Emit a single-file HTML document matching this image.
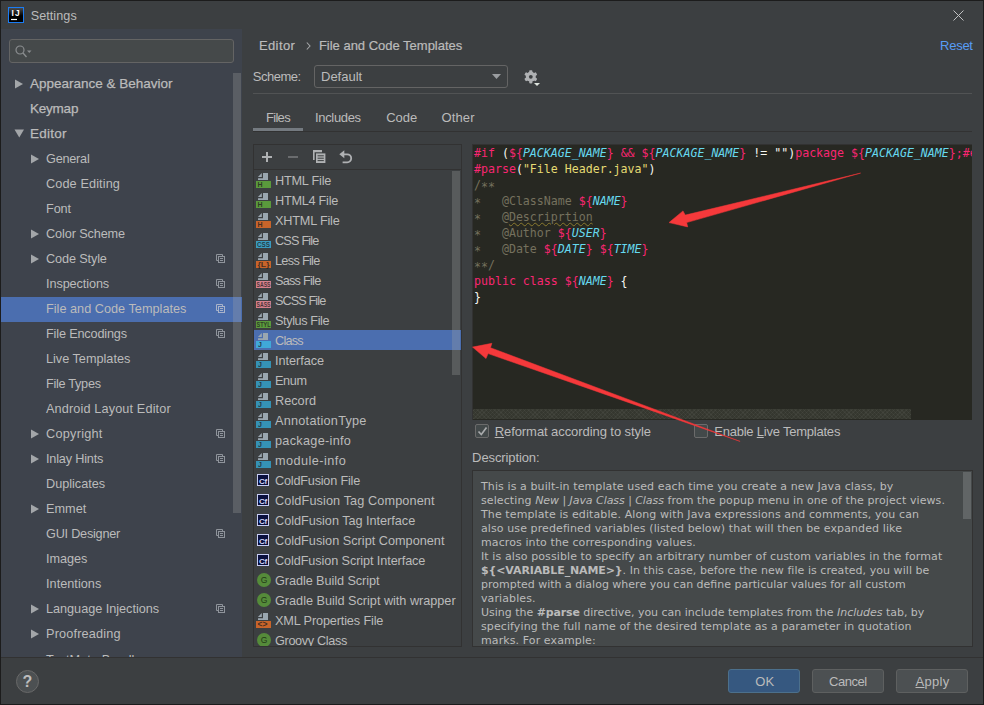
<!DOCTYPE html>
<html><head><meta charset="utf-8"><title>Settings</title>
<style>
*{box-sizing:border-box;margin:0;padding:0}
html,body{width:984px;height:705px;overflow:hidden;background:#3c3f41}
body{position:relative;font-family:"Liberation Sans",sans-serif;font-size:12.7px;color:#bbbbbb}
.abs{position:absolute}
svg{position:absolute;overflow:visible}
#frame{position:absolute;left:0;top:0;width:984px;height:705px;border:1px solid #1c1c1c;z-index:50}
#title{position:absolute;left:31px;top:8px;height:16px;line-height:16px;font-size:12.6px;color:#bbbbbb}
#left{position:absolute;left:1px;top:29px;width:241px;height:628px;background:#3e434c;overflow:hidden}
#search{position:absolute;left:8px;top:10px;width:225px;height:24px;border:1px solid #646464;border-radius:3px;background:#45494a}
.row{position:absolute;left:0;width:241px;height:25px;line-height:25px;white-space:nowrap}
.row.sel{background:#4b6eaf}
.row .t{position:absolute;top:0}
.l0 .t{left:29px;top:-1px;font-size:13.5px;-webkit-text-stroke:.25px #bbbbbb}
.l1 .t{left:45px;font-size:12.7px}
.arr{top:7px;width:10px;height:10px}
.cp{left:215px;top:7px;width:10px;height:10px}
#lsb{position:absolute;left:232px;top:44px;width:8px;height:440px;background:rgba(166,166,166,.28)}
#sep{position:absolute;left:1px;top:657px;width:982px;height:1px;background:#323232}
.btn{position:absolute;top:669px;width:72px;height:24px;line-height:22px;text-align:center;border:1px solid #5e6060;border-radius:3px;background:#4c5052;font-size:13px;color:#bbbbbb}
.btn.ok{background:#365880;border-color:#4c708c}
#help{position:absolute;left:16px;top:670px;width:23px;height:23px;border-radius:12px;background:#4c5052;border:1px solid #686868;text-align:center;line-height:21px;font-size:16px;font-weight:bold;color:#bdbdbd}
#crumb{position:absolute;left:259px;top:36px;height:18px;line-height:18px;font-size:13.6px;white-space:nowrap}
#reset{position:absolute;left:940px;top:36px;height:18px;line-height:18px;font-size:13px;color:#589df6}
#schl{position:absolute;left:253px;top:67px;height:18px;line-height:18px;font-size:13px}
#combo{position:absolute;left:314px;top:65px;width:194px;height:23px;border:1px solid #646464;border-radius:3px;line-height:21px;padding-left:6px;font-size:13px}
.lb{position:absolute;height:16px;line-height:16px;white-space:nowrap;z-index:5}
u{text-underline-offset:1px}
.hl{position:absolute;left:253px;width:719px;height:1px}
.tab{position:absolute;top:108px;height:18px;line-height:18px;font-size:13px;white-space:nowrap}
#tabu{position:absolute;left:253px;top:128px;width:50px;height:3px;background:#747a80}
#list{position:absolute;left:253px;top:144px;width:209px;height:503px;border:1px solid #323232;overflow:hidden}
#ltb{position:absolute;left:0;top:0;width:207px;height:25px;border-bottom:1px solid #323232}
.li{position:absolute;left:0;width:207px;height:20px;line-height:20px;white-space:nowrap}
.li.sel{background:#4b6eaf}
.li .t{position:absolute;left:21px;top:1px;font-size:12.7px}
.li svg{left:2px;top:2px;width:16px;height:16px}
#lsb2{position:absolute;left:198px;top:26px;width:8px;height:204px;background:rgba(166,166,166,.27)}
#ed{position:absolute;left:472px;top:144px;width:500px;height:276px;background:#272822;border:1px solid #323232;border-right:none;border-bottom:none;overflow:hidden}
#code{position:absolute;left:1px;top:0px;font-family:"DejaVu Sans Mono","Liberation Mono",monospace;font-size:11.6px;line-height:16px;white-space:pre;color:#f8f8f2;letter-spacing:0}
#code .k{color:#f92672}
#code .v{color:#66d9ef;font-style:italic}
#code .s{color:#e6db74}
#code .c{color:#75715e}
#code .a{position:relative;top:2px}
#code .w{text-decoration:underline wavy #8a7a2e;text-decoration-thickness:1px;text-underline-offset:1px}
#hsb{position:absolute;left:0;top:264px;width:438px;height:10px;background:repeating-linear-gradient(45deg,rgba(255,255,255,.035) 0 1px,transparent 1px 3px),repeating-linear-gradient(-45deg,rgba(255,255,255,.035) 0 1px,transparent 1px 3px),#35372f}
.cb{position:absolute;top:424px;width:14px;height:14px;border:1px solid #6b6b6b;border-radius:2px;background:#43494a}
.cbl{position:absolute;top:422px;height:18px;line-height:18px;font-size:13px;white-space:nowrap}
#dl{position:absolute;left:473px;top:448px;height:18px;line-height:18px;font-size:13px}
#desc{position:absolute;left:472px;top:470px;width:501px;height:177px;border:1px solid #323232;background:#45494a;overflow:hidden}
#dt{position:absolute;left:8px;top:9px;width:480px;font-family:"DejaVu Sans","Liberation Sans",sans-serif;font-size:11px;line-height:14px;white-space:nowrap;color:#bbbbbb}
#dt div{height:14px}
#dt b{letter-spacing:-.12px}
#dt i{letter-spacing:-.05px}
#dsb{position:absolute;left:490px;top:1px;width:8px;height:47px;background:#616566}
</style></head><body>
<svg style="left:8px;top:7px;width:16px;height:16px" viewBox="0 0 16 16"><defs><linearGradient id="ijg" x1="0" y1="0" x2="0" y2="1"><stop offset="0" stop-color="#505050"/><stop offset=".55" stop-color="#000"/><stop offset="1" stop-color="#000"/></linearGradient></defs><rect x=".5" y=".5" width="15" height="15" fill="url(#ijg)" stroke="#1a7cf4" stroke-width="1"/><text y="9" font-family="Liberation Sans,sans-serif" font-weight="bold" font-size="8.4" fill="#fff"><tspan x="3.4">I</tspan><tspan x="7">J</tspan></text><rect x="3" y="11.9" width="6" height="1.2" fill="#fff"/></svg>
<svg style="left:953px;top:10px;width:11px;height:11px" viewBox="0 0 11 11"><path d="M0.5 0.5L10.5 10.5M10.5 0.5L0.5 10.5" stroke="#c0c1c2" stroke-width="1" fill="none"/></svg>
<div id="left">
 <div id="search"><svg style="left:5px;top:5px;width:20px;height:13px" viewBox="0 0 20 13" fill="none" stroke="#8a8d8f"><circle cx="5" cy="5" r="4" stroke-width="1.2"/><path d="M8 8L11.5 12" stroke-width="1.4"/><path d="M12 5.5H16.5L14.25 8Z" fill="#8a8d8f" stroke="none"/></svg></div>
<div class="row l0" style="top:43px"><svg class="arr" style="left:14px" viewBox="0 0 10 10"><path d="M0 0.5 L8 5 L0 9.5Z" fill="#a3a6a9"/></svg><span class="t" style="letter-spacing:-0.01px">Appearance &amp; Behavior</span></div>
<div class="row l0" style="top:68px"><span class="t" style="letter-spacing:-0.226px">Keymap</span></div>
<div class="row l0" style="top:93px"><svg class="arr" style="left:14px" viewBox="0 0 10 10"><path d="M-0.5 0.5 L9 0.5 L4.25 8.5Z" fill="#a3a6a9"/></svg><span class="t" style="letter-spacing:0.224px">Editor</span></div>
<div class="row l1" style="top:118px"><svg class="arr" style="left:30px" viewBox="0 0 10 10"><path d="M0 0.5 L8 5 L0 9.5Z" fill="#a3a6a9"/></svg><span class="t" style="letter-spacing:-0.24px">General</span></div>
<div class="row l1" style="top:143px"><span class="t" style="letter-spacing:0.113px">Code Editing</span></div>
<div class="row l1" style="top:168px"><span class="t" style="letter-spacing:-0.097px">Font</span></div>
<div class="row l1" style="top:193px"><svg class="arr" style="left:30px" viewBox="0 0 10 10"><path d="M0 0.5 L8 5 L0 9.5Z" fill="#a3a6a9"/></svg><span class="t" style="letter-spacing:-0.117px">Color Scheme</span></div>
<div class="row l1" style="top:218px"><svg class="arr" style="left:30px" viewBox="0 0 10 10"><path d="M0 0.5 L8 5 L0 9.5Z" fill="#a3a6a9"/></svg><span class="t" style="letter-spacing:-0.129px">Code Style</span><svg class="cp" viewBox="0 0 10 10" fill="none" stroke="#8f949b" stroke-width="1"><path d="M2.5 6.5H0.5V0.5H6.5V2.5"/><rect x="2.5" y="2.5" width="6" height="6"/><path d="M4 4.5H7M4 6.5H7"/></svg></div>
<div class="row l1" style="top:243px"><span class="t" style="letter-spacing:-0.099px">Inspections</span><svg class="cp" viewBox="0 0 10 10" fill="none" stroke="#8f949b" stroke-width="1"><path d="M2.5 6.5H0.5V0.5H6.5V2.5"/><rect x="2.5" y="2.5" width="6" height="6"/><path d="M4 4.5H7M4 6.5H7"/></svg></div>
<div class="row l1 sel" style="top:268px"><span class="t" style="letter-spacing:0.013px">File and Code Templates</span><svg class="cp" viewBox="0 0 10 10" fill="none" stroke="#a9b3c9" stroke-width="1"><path d="M2.5 6.5H0.5V0.5H6.5V2.5"/><rect x="2.5" y="2.5" width="6" height="6"/><path d="M4 4.5H7M4 6.5H7"/></svg></div>
<div class="row l1" style="top:293px"><span class="t" style="letter-spacing:-0.163px">File Encodings</span><svg class="cp" viewBox="0 0 10 10" fill="none" stroke="#8f949b" stroke-width="1"><path d="M2.5 6.5H0.5V0.5H6.5V2.5"/><rect x="2.5" y="2.5" width="6" height="6"/><path d="M4 4.5H7M4 6.5H7"/></svg></div>
<div class="row l1" style="top:318px"><span class="t" style="letter-spacing:-0.008px">Live Templates</span></div>
<div class="row l1" style="top:343px"><span class="t" style="letter-spacing:-0.288px">File Types</span></div>
<div class="row l1" style="top:368px"><span class="t" style="letter-spacing:0.133px">Android Layout Editor</span></div>
<div class="row l1" style="top:393px"><svg class="arr" style="left:30px" viewBox="0 0 10 10"><path d="M0 0.5 L8 5 L0 9.5Z" fill="#a3a6a9"/></svg><span class="t" style="letter-spacing:0.261px">Copyright</span><svg class="cp" viewBox="0 0 10 10" fill="none" stroke="#8f949b" stroke-width="1"><path d="M2.5 6.5H0.5V0.5H6.5V2.5"/><rect x="2.5" y="2.5" width="6" height="6"/><path d="M4 4.5H7M4 6.5H7"/></svg></div>
<div class="row l1" style="top:418px"><svg class="arr" style="left:30px" viewBox="0 0 10 10"><path d="M0 0.5 L8 5 L0 9.5Z" fill="#a3a6a9"/></svg><span class="t" style="letter-spacing:-0.193px">Inlay Hints</span><svg class="cp" viewBox="0 0 10 10" fill="none" stroke="#8f949b" stroke-width="1"><path d="M2.5 6.5H0.5V0.5H6.5V2.5"/><rect x="2.5" y="2.5" width="6" height="6"/><path d="M4 4.5H7M4 6.5H7"/></svg></div>
<div class="row l1" style="top:443px"><span class="t" style="letter-spacing:-0.017px">Duplicates</span></div>
<div class="row l1" style="top:468px"><svg class="arr" style="left:30px" viewBox="0 0 10 10"><path d="M0 0.5 L8 5 L0 9.5Z" fill="#a3a6a9"/></svg><span class="t" style="letter-spacing:0.028px">Emmet</span></div>
<div class="row l1" style="top:493px"><span class="t" style="letter-spacing:-0.233px">GUI Designer</span><svg class="cp" viewBox="0 0 10 10" fill="none" stroke="#8f949b" stroke-width="1"><path d="M2.5 6.5H0.5V0.5H6.5V2.5"/><rect x="2.5" y="2.5" width="6" height="6"/><path d="M4 4.5H7M4 6.5H7"/></svg></div>
<div class="row l1" style="top:518px"><span class="t" style="letter-spacing:-0.042px">Images</span></div>
<div class="row l1" style="top:543px"><span class="t" style="letter-spacing:0.03px">Intentions</span></div>
<div class="row l1" style="top:568px"><svg class="arr" style="left:30px" viewBox="0 0 10 10"><path d="M0 0.5 L8 5 L0 9.5Z" fill="#a3a6a9"/></svg><span class="t" style="letter-spacing:-0.027px">Language Injections</span><svg class="cp" viewBox="0 0 10 10" fill="none" stroke="#8f949b" stroke-width="1"><path d="M2.5 6.5H0.5V0.5H6.5V2.5"/><rect x="2.5" y="2.5" width="6" height="6"/><path d="M4 4.5H7M4 6.5H7"/></svg></div>
<div class="row l1" style="top:593px"><svg class="arr" style="left:30px" viewBox="0 0 10 10"><path d="M0 0.5 L8 5 L0 9.5Z" fill="#a3a6a9"/></svg><span class="t" style="letter-spacing:0.177px">Proofreading</span></div>
<div class="row l1" style="top:618px"><span class="t" style="letter-spacing:0.076px;top:1px">TextMate Bundles</span></div>
 <div id="lsb"></div>
</div>
<div id="combo">Default<svg style="left:177px;top:8px;width:9px;height:5px" viewBox="0 0 9 5"><path d="M0 0H9L4.5 5Z" fill="#9a9da0"/></svg></div>
<svg style="left:524px;top:70px;width:17px;height:17px" viewBox="0 0 17 17"><g transform="translate(6.8 6.8)"><g fill="#afb1b3"><circle r="5"/><rect x="-1.6" y="-6.6" width="3.2" height="13.2" rx=".8"/><rect x="-1.6" y="-6.6" width="3.2" height="13.2" rx=".8" transform="rotate(60)"/><rect x="-1.6" y="-6.6" width="3.2" height="13.2" rx=".8" transform="rotate(120)"/></g><circle r="1.9" fill="#3c3f41"/></g><path d="M10 13H16L13 16Z" fill="#dfe6df"/></svg>
<div class="hl" style="top:93px;background:#515354"></div>
<div class="hl" style="top:131px;background:#323232"></div>
<div id="tabu"></div>
<div id="list">
<div id="ltb">
<svg style="left:8px;top:7px;width:10px;height:10px" viewBox="0 0 10 10"><path d="M4 0H6V4H10V6H6V10H4V6H0V4H4Z" fill="#afb1b3"/></svg>
<svg style="left:34px;top:7px;width:10px;height:10px" viewBox="0 0 10 10"><rect x="0" y="4" width="10" height="2" fill="#6a6c6e"/></svg>
<svg style="left:59px;top:5px;width:13px;height:13px" viewBox="0 0 13 13"><path d="M0 0H9V2.2H1.6V10H0Z" fill="#afb1b3"/><rect x="3" y="3.4" width="9.4" height="9.6" fill="#afb1b3"/><path d="M4.6 5.8H10.8M4.6 8.2H10.8M4.6 10.6H10.8" stroke="#3c3f41" stroke-width="1"/></svg>
<svg style="left:85px;top:5px;width:14px;height:14px" viewBox="0 0 14 14"><path d="M0.3 4.3L5.3 0.3V8.3Z" fill="#afb1b3"/><path d="M5 4.3H8.2A4 4 0 0 1 8.2 12.3H3.6" fill="none" stroke="#afb1b3" stroke-width="1.8"/></svg>
</div>
<div class="li" style="top:25px"><svg viewBox="0 0 16 16"><path d="M7 1H12V8H2V6.2H7Z" fill="#9aa7b0"/><path d="M1.9 5L5.8 1V5Z" fill="#9aa7b0"/><rect x="0" y="9" width="15" height="7" fill="#5a9a3c"/><text x="1.5" y="15.2" font-family="Liberation Sans,sans-serif" font-size="7" font-weight="bold" fill="#231f20" fill-opacity=".8" text-anchor="start">H</text></svg><span class="t" style="letter-spacing:-0.206px">HTML File</span></div>
<div class="li" style="top:45px"><svg viewBox="0 0 16 16"><path d="M7 1H12V8H2V6.2H7Z" fill="#9aa7b0"/><path d="M1.9 5L5.8 1V5Z" fill="#9aa7b0"/><rect x="0" y="9" width="15" height="7" fill="#5a9a3c"/><text x="1.5" y="15.2" font-family="Liberation Sans,sans-serif" font-size="7" font-weight="bold" fill="#231f20" fill-opacity=".8" text-anchor="start">H</text></svg><span class="t" style="letter-spacing:-0.251px">HTML4 File</span></div>
<div class="li" style="top:65px"><svg viewBox="0 0 16 16"><path d="M7 1H12V8H2V6.2H7Z" fill="#9aa7b0"/><path d="M1.9 5L5.8 1V5Z" fill="#9aa7b0"/><rect x="0" y="9" width="15" height="7" fill="#c8642a"/><text x="1.5" y="15.2" font-family="Liberation Sans,sans-serif" font-size="7" font-weight="bold" fill="#231f20" fill-opacity=".8" text-anchor="start">H</text></svg><span class="t" style="letter-spacing:-0.189px">XHTML File</span></div>
<div class="li" style="top:85px"><svg viewBox="0 0 16 16"><path d="M7 1H12V8H2V6.2H7Z" fill="#9aa7b0"/><path d="M1.9 5L5.8 1V5Z" fill="#9aa7b0"/><rect x="0" y="9" width="15" height="7" fill="#3a9bc0"/><text x="1" y="15.2" font-family="Liberation Sans,sans-serif" font-size="7" font-weight="bold" fill="#231f20" fill-opacity=".8" text-anchor="start" textLength="13" lengthAdjust="spacingAndGlyphs">CSS</text></svg><span class="t" style="letter-spacing:-0.809px">CSS File</span></div>
<div class="li" style="top:105px"><svg viewBox="0 0 16 16"><path d="M7 1H12V8H2V6.2H7Z" fill="#9aa7b0"/><path d="M1.9 5L5.8 1V5Z" fill="#9aa7b0"/><rect x="0" y="9" width="15" height="7" fill="#c8642a"/><text x="1.5" y="15.2" font-family="Liberation Sans,sans-serif" font-size="7" font-weight="bold" fill="#231f20" fill-opacity=".8" text-anchor="start" textLength="12" lengthAdjust="spacingAndGlyphs">{L}</text></svg><span class="t" style="letter-spacing:-0.685px">Less File</span></div>
<div class="li" style="top:125px"><svg viewBox="0 0 16 16"><path d="M7 1H12V8H2V6.2H7Z" fill="#9aa7b0"/><path d="M1.9 5L5.8 1V5Z" fill="#9aa7b0"/><rect x="0" y="9" width="15" height="7" fill="#d5808d"/><text x="0.5" y="15.2" font-family="Liberation Sans,sans-serif" font-size="7" font-weight="bold" fill="#231f20" fill-opacity=".8" text-anchor="start" textLength="14" lengthAdjust="spacingAndGlyphs">SASS</text></svg><span class="t" style="letter-spacing:-0.748px">Sass File</span></div>
<div class="li" style="top:145px"><svg viewBox="0 0 16 16"><path d="M7 1H12V8H2V6.2H7Z" fill="#9aa7b0"/><path d="M1.9 5L5.8 1V5Z" fill="#9aa7b0"/><rect x="0" y="9" width="15" height="7" fill="#d5808d"/><text x="0.5" y="15.2" font-family="Liberation Sans,sans-serif" font-size="7" font-weight="bold" fill="#231f20" fill-opacity=".8" text-anchor="start" textLength="14" lengthAdjust="spacingAndGlyphs">SASS</text></svg><span class="t" style="letter-spacing:-0.916px">SCSS File</span></div>
<div class="li" style="top:165px"><svg viewBox="0 0 16 16"><path d="M7 1H12V8H2V6.2H7Z" fill="#9aa7b0"/><path d="M1.9 5L5.8 1V5Z" fill="#9aa7b0"/><rect x="0" y="9" width="15" height="7" fill="#5a9a3c"/><text x="0.5" y="15.2" font-family="Liberation Sans,sans-serif" font-size="7.5" font-weight="bold" fill="#231f20" fill-opacity=".8" text-anchor="start" textLength="14" lengthAdjust="spacingAndGlyphs">STYL</text></svg><span class="t" style="letter-spacing:-0.393px">Stylus File</span></div>
<div class="li sel" style="top:185px"><svg viewBox="0 0 16 16"><path d="M7 1H12V8H2V6.2H7Z" fill="#9aa7b0"/><path d="M1.9 5L5.8 1V5Z" fill="#9aa7b0"/><rect x="0" y="9" width="15" height="7" fill="#40a9d8"/><text x="2" y="15.2" font-family="Liberation Sans,sans-serif" font-size="7" font-weight="bold" fill="#231f20" fill-opacity=".8" text-anchor="start">J</text></svg><span class="t" style="letter-spacing:-0.759px">Class</span></div>
<div class="li" style="top:205px"><svg viewBox="0 0 16 16"><path d="M7 1H12V8H2V6.2H7Z" fill="#9aa7b0"/><path d="M1.9 5L5.8 1V5Z" fill="#9aa7b0"/><rect x="0" y="9" width="15" height="7" fill="#3592b5"/><text x="2" y="15.2" font-family="Liberation Sans,sans-serif" font-size="7" font-weight="bold" fill="#231f20" fill-opacity=".8" text-anchor="start">J</text></svg><span class="t" style="letter-spacing:-0.034px">Interface</span></div>
<div class="li" style="top:225px"><svg viewBox="0 0 16 16"><path d="M7 1H12V8H2V6.2H7Z" fill="#9aa7b0"/><path d="M1.9 5L5.8 1V5Z" fill="#9aa7b0"/><rect x="0" y="9" width="15" height="7" fill="#3592b5"/><text x="2" y="15.2" font-family="Liberation Sans,sans-serif" font-size="7" font-weight="bold" fill="#231f20" fill-opacity=".8" text-anchor="start">J</text></svg><span class="t" style="letter-spacing:-0.352px">Enum</span></div>
<div class="li" style="top:245px"><svg viewBox="0 0 16 16"><path d="M7 1H12V8H2V6.2H7Z" fill="#9aa7b0"/><path d="M1.9 5L5.8 1V5Z" fill="#9aa7b0"/><rect x="0" y="9" width="15" height="7" fill="#3592b5"/><text x="2" y="15.2" font-family="Liberation Sans,sans-serif" font-size="7" font-weight="bold" fill="#231f20" fill-opacity=".8" text-anchor="start">J</text></svg><span class="t" style="letter-spacing:0.019px">Record</span></div>
<div class="li" style="top:265px"><svg viewBox="0 0 16 16"><path d="M7 1H12V8H2V6.2H7Z" fill="#9aa7b0"/><path d="M1.9 5L5.8 1V5Z" fill="#9aa7b0"/><rect x="0" y="9" width="15" height="7" fill="#3592b5"/><text x="2" y="15.2" font-family="Liberation Sans,sans-serif" font-size="7" font-weight="bold" fill="#231f20" fill-opacity=".8" text-anchor="start">J</text></svg><span class="t" style="letter-spacing:0.247px">AnnotationType</span></div>
<div class="li" style="top:285px"><svg viewBox="0 0 16 16"><path d="M7 1H12V8H2V6.2H7Z" fill="#9aa7b0"/><path d="M1.9 5L5.8 1V5Z" fill="#9aa7b0"/><rect x="0" y="9" width="15" height="7" fill="#3592b5"/><text x="2" y="15.2" font-family="Liberation Sans,sans-serif" font-size="7" font-weight="bold" fill="#231f20" fill-opacity=".8" text-anchor="start">J</text></svg><span class="t" style="letter-spacing:0.295px">package-info</span></div>
<div class="li" style="top:305px"><svg viewBox="0 0 16 16"><path d="M7 1H12V8H2V6.2H7Z" fill="#9aa7b0"/><path d="M1.9 5L5.8 1V5Z" fill="#9aa7b0"/><rect x="0" y="9" width="15" height="7" fill="#3592b5"/><text x="2" y="15.2" font-family="Liberation Sans,sans-serif" font-size="7" font-weight="bold" fill="#231f20" fill-opacity=".8" text-anchor="start">J</text></svg><span class="t" style="letter-spacing:0.46px">module-info</span></div>
<div class="li" style="top:325px"><svg viewBox="0 0 16 16"><rect x="1.5" y="2.5" width="11" height="11" fill="#0a0f3c" stroke="#c5caf0" stroke-width="1"/><text x="7" y="11.5" font-family="Liberation Sans,sans-serif" font-size="8" font-weight="bold" fill="#d6dafa" text-anchor="middle" letter-spacing="-.3">Cf</text></svg><span class="t" style="letter-spacing:-0.211px">ColdFusion File</span></div>
<div class="li" style="top:345px"><svg viewBox="0 0 16 16"><rect x="1.5" y="2.5" width="11" height="11" fill="#0a0f3c" stroke="#c5caf0" stroke-width="1"/><text x="7" y="11.5" font-family="Liberation Sans,sans-serif" font-size="8" font-weight="bold" fill="#d6dafa" text-anchor="middle" letter-spacing="-.3">Cf</text></svg><span class="t" style="letter-spacing:0.107px">ColdFusion Tag Component</span></div>
<div class="li" style="top:365px"><svg viewBox="0 0 16 16"><rect x="1.5" y="2.5" width="11" height="11" fill="#0a0f3c" stroke="#c5caf0" stroke-width="1"/><text x="7" y="11.5" font-family="Liberation Sans,sans-serif" font-size="8" font-weight="bold" fill="#d6dafa" text-anchor="middle" letter-spacing="-.3">Cf</text></svg><span class="t" style="letter-spacing:-0.027px">ColdFusion Tag Interface</span></div>
<div class="li" style="top:385px"><svg viewBox="0 0 16 16"><rect x="1.5" y="2.5" width="11" height="11" fill="#0a0f3c" stroke="#c5caf0" stroke-width="1"/><text x="7" y="11.5" font-family="Liberation Sans,sans-serif" font-size="8" font-weight="bold" fill="#d6dafa" text-anchor="middle" letter-spacing="-.3">Cf</text></svg><span class="t" style="letter-spacing:0.006px">ColdFusion Script Component</span></div>
<div class="li" style="top:405px"><svg viewBox="0 0 16 16"><rect x="1.5" y="2.5" width="11" height="11" fill="#0a0f3c" stroke="#c5caf0" stroke-width="1"/><text x="7" y="11.5" font-family="Liberation Sans,sans-serif" font-size="8" font-weight="bold" fill="#d6dafa" text-anchor="middle" letter-spacing="-.3">Cf</text></svg><span class="t" style="letter-spacing:-0.101px">ColdFusion Script Interface</span></div>
<div class="li" style="top:425px"><svg viewBox="0 0 16 16"><circle cx="8" cy="8" r="7" fill="#558b3a"/><text x="8" y="11" font-family="Liberation Sans,sans-serif" font-size="8.5" fill="#223a18" text-anchor="middle">G</text></svg><span class="t" style="letter-spacing:-0.071px">Gradle Build Script</span></div>
<div class="li" style="top:445px"><svg viewBox="0 0 16 16"><circle cx="8" cy="8" r="7" fill="#558b3a"/><text x="8" y="11" font-family="Liberation Sans,sans-serif" font-size="8.5" fill="#223a18" text-anchor="middle">G</text></svg><span class="t" style="letter-spacing:-0.02px">Gradle Build Script with wrapper</span></div>
<div class="li" style="top:465px"><svg viewBox="0 0 16 16"><path d="M7 1H12V8H2V6.2H7Z" fill="#9aa7b0"/><path d="M1.9 5L5.8 1V5Z" fill="#9aa7b0"/><rect x="0" y="9" width="15" height="7" fill="#c8642a"/><text x="1.5" y="15.2" font-family="Liberation Sans,sans-serif" font-size="8.5" font-weight="bold" fill="#231f20" fill-opacity=".8" text-anchor="start" textLength="10" lengthAdjust="spacingAndGlyphs">&lt;&gt;</text></svg><span class="t" style="letter-spacing:-0.141px">XML Properties File</span></div>
<div class="li" style="top:485px"><svg viewBox="0 0 16 16"><circle cx="8" cy="8" r="7" fill="#558b3a"/><text x="8" y="11" font-family="Liberation Sans,sans-serif" font-size="8.5" fill="#223a18" text-anchor="middle">G</text></svg><span class="t" style="letter-spacing:-0.351px">Groovy Class</span></div>
<div id="lsb2"></div>
</div>
<div id="ed"><div id="code"><span class="k">#if</span> (<span class="k">${</span><span class="v">PACKAGE_NAME</span><span class="k">}</span> <span class="k">&amp;&amp;</span> <span class="k">${</span><span class="v">PACKAGE_NAME</span><span class="k">}</span> != "")<span class="k">package</span> <span class="k">${</span><span class="v">PACKAGE_NAME</span><span class="k">}</span><span class="k">;#end</span>
<span class="k">#parse</span>(<span class="s">"File Header.java"</span>)
<span class="c">/<span class="a">**</span></span>
<span class="c"><span class="a">*</span>   @ClassName </span><span class="k">${</span><span class="v">NAME</span><span class="k">}</span>
<span class="c"><span class="a">*</span>   @<span class="w">Descriprtion</span></span>
<span class="c"><span class="a">*</span>   @Author </span><span class="k">${</span><span class="v">USER</span><span class="k">}</span>
<span class="c"><span class="a">*</span>   @Date </span><span class="k">${</span><span class="v">DATE</span><span class="k">}</span> <span class="k">${</span><span class="v">TIME</span><span class="k">}</span>
<span class="c"><span class="a">**</span>/</span>
<span class="k">public class</span> <span class="k">${</span><span class="v">NAME</span><span class="k">}</span> {
}</div><div id="hsb"></div></div>
<div class="cb" style="left:475px"><svg style="left:1px;top:1px;width:11px;height:11px" viewBox="0 0 11 11"><path d="M1.5 5.5L4.3 8.5L9.5 1.5" fill="none" stroke="#a9abad" stroke-width="1.7"/></svg></div>
<div class="cb" style="left:694px"></div>
<div id="desc"><div id="dt"><div style="letter-spacing:0.1px">This is a built-in template used each time you create a new Java class, by</div><div style="letter-spacing:0.092px">selecting <i>New | Java Class | Class</i> from the popup menu in one of the project views.</div><div style="letter-spacing:0.1px">The template is editable. Along with Java expressions and comments, you can</div><div style="letter-spacing:0.1px">also use predefined variables (listed below) that will then be expanded like</div><div style="letter-spacing:0.1px">macros into the corresponding values.</div><div style="letter-spacing:0.1px">It is also possible to specify an arbitrary number of custom variables in the format</div><div style="letter-spacing:0.052px"><b>${&lt;VARIABLE_NAME&gt;}</b>. In this case, before the new file is created, you will be</div><div style="letter-spacing:0.0px">prompted with a dialog where you can define particular values for all custom</div><div style="letter-spacing:0.1px">variables.</div><div style="letter-spacing:-0.02px">Using the <b>#parse</b> directive, you can include templates from the <i>Includes</i> tab, by</div><div style="letter-spacing:0.1px">specifying the full name of the desired template as a parameter in quotation</div><div style="letter-spacing:0.1px">marks. For example:</div><div style="letter-spacing:0.1px"><b>#parse("File Header.java")</b></div></div><div id="dsb"></div></div>
<svg id="arrows" style="left:0;top:0;width:984px;height:705px;z-index:20" viewBox="0 0 984 705">
<path d="M860.6 173.1 L685.2 215.1 L683 210.9 L669 222.6 L687.7 226.9 L686.7 222.6 Z" fill="#f5393b" stroke="#f5393b" stroke-width=".5" stroke-linejoin="round"/>
<path d="M740.1 441.4 L490.5 347.7 L491.9 343.3 L472.5 347.1 L486 358.6 L488.1 353.6 Z" fill="#f5393b" stroke="#f5393b" stroke-width=".5" stroke-linejoin="round"/>
</svg>
<div class="lb" style="left:258.9px;top:37.50px;font-size:13px;letter-spacing:0.406px;-webkit-text-stroke:.2px #bbb">Editor</div>
<div class="lb" style="left:318.9px;top:37.50px;font-size:13px;letter-spacing:-0.008px;-webkit-text-stroke:.2px #bbb">File and Code Templates</div>
<div class="lb" style="left:940.1px;top:37.50px;font-size:13px;letter-spacing:-0.267px;color:#589df6">Reset</div>
<div class="lb" style="left:252.8px;top:68.50px;font-size:13px;letter-spacing:-0.485px;">Scheme:</div>
<div class="lb" style="left:265.9px;top:109.50px;font-size:13px;letter-spacing:-0.663px;">Files</div>
<div class="lb" style="left:315.0px;top:109.50px;font-size:13px;letter-spacing:-0.332px;">Includes</div>
<div class="lb" style="left:386.2px;top:109.50px;font-size:13px;letter-spacing:-0.026px;">Code</div>
<div class="lb" style="left:441.6px;top:109.50px;font-size:13px;letter-spacing:0.096px;">Other</div>
<div class="lb" style="left:494.7px;top:423.50px;font-size:13px;letter-spacing:-0.074px;"><u>R</u>eformat according to style</div>
<div class="lb" style="left:714.2px;top:423.50px;font-size:13px;letter-spacing:-0.219px;">Enable <u>L</u>ive Templates</div>
<div class="lb" style="left:472.1px;top:449.50px;font-size:13px;letter-spacing:-0.104px;">Description:</div>
<div class="lb" style="left:755.2px;top:673.50px;font-size:13px;letter-spacing:0.203px;">OK</div>
<div class="lb" style="left:829.1px;top:673.50px;font-size:13px;letter-spacing:-0.494px;">Cancel</div>
<div class="lb" style="left:915.5px;top:673.50px;font-size:13px;letter-spacing:0.317px;"><u>A</u>pply</div>
<div class="lb" style="left:30.7px;top:7.63px;font-size:12.6px;letter-spacing:0.069px;">Settings</div>
<svg style="left:306px;top:42px;width:5px;height:8px" viewBox="0 0 5 8"><path d="M0.8 0.5L4 4L0.8 7.5" fill="none" stroke="#a4a6a8" stroke-width="1.1"/></svg>
<div id="sep"></div>
<div id="help">?</div>
<div class="btn ok" style="left:728px"></div>
<div class="btn" style="left:812px"></div>
<div class="btn" style="left:896px"></div>
<div id="frame"></div>
</body></html>
